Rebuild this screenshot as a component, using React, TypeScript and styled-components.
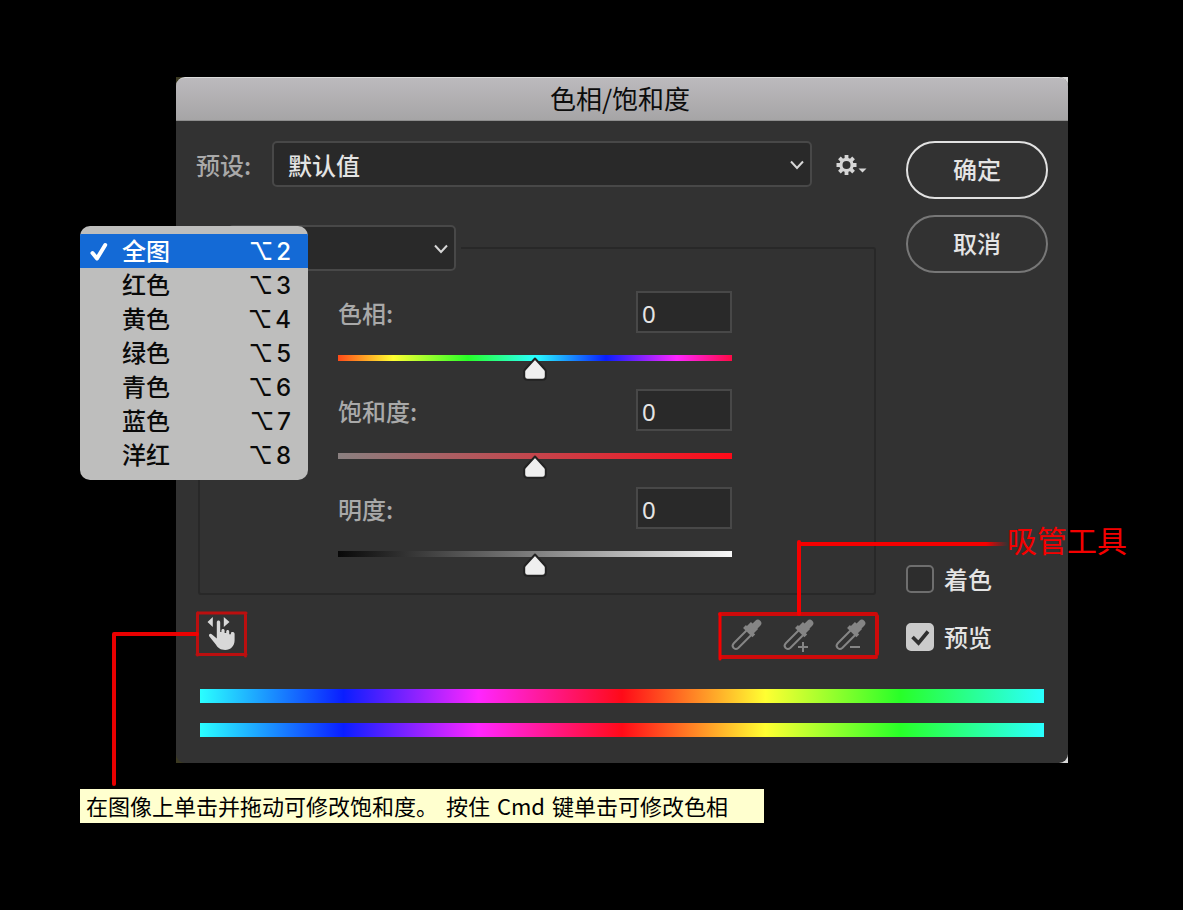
import React, { useState } from 'react';
import styled, { createGlobalStyle } from 'styled-components';

const colors = {
  panel: '#323232',
  field: '#292929',
  fieldBorder: '#484848',
  groove: '#282828',
  label: '#a9a9a9',
  text: '#e4e4e4',
  mark: '#f50000',
  highlight: '#146ad6',
};

const cjk = "'Noto Sans CJK SC', sans-serif";

const GlobalStyle = createGlobalStyle`
  *, *::before, *::after { box-sizing: border-box; }
  body {
    margin: 0;
    background: #000;
    color: ${colors.text};
    font-family: ${cjk};
    font-size: 24px;
    line-height: 34px;
  }
  button, input, select { font: inherit; color: inherit; margin: 0; }
`;

const Page = styled.main`
  padding: 77px 115px 87px 176px;
`;

const Frame = styled.div`
  background: linear-gradient(to right, #3c3a22 50%, #d8d8d8 50%);
`;

const Dialog = styled.section`
  background: ${colors.panel};
  border-radius: 9px;
`;

const TitleBar = styled.header`
  height: 44px;
  padding: 0 4px 2px 0;
  border-radius: 9px 9px 0 0;
  border-top: 1px solid #dcdcdc;
  border-bottom: 1px solid #8e8e8e;
  background: linear-gradient(#bcbabd, #a6a5a6);
  display: flex;
  align-items: center;
  justify-content: center;
`;

const Title = styled.h1`
  margin: 0;
  font-size: 26px;
  font-weight: 400;
  color: #0c0c0c;
`;

const Body = styled.div`
  padding: 20px 20px 26px;
  display: flex;
  flex-direction: column;
  gap: 31px;
`;

const Columns = styled.div`
  display: grid;
  grid-template-columns: 1fr 142px;
  column-gap: 30px;
`;

const MainColumn = styled.div`
  display: flex;
  flex-direction: column;
`;

const SideColumn = styled.div`
  display: flex;
  flex-direction: column;
  justify-content: space-between;
  padding-bottom: 7px;
`;

const Stack = styled.div<{ $gap: number }>`
  display: flex;
  flex-direction: column;
  gap: ${(p) => p.$gap}px;
`;

const PresetRow = styled.div`
  display: flex;
  align-items: center;
  height: 46px;
  margin-bottom: 38px;
`;

const FieldLabel = styled.label`
  padding-top: 2px;
  color: ${colors.label};
  font-weight: 500;
`;

const PresetLabel = styled(FieldLabel)`
  width: 76px;
`;

const SelectBox = styled.span<{ $width?: number }>`
  position: relative;
  display: block;
  height: 46px;
  ${(p) => (p.$width ? `width: ${p.$width}px;` : 'flex: 1;')}

  svg {
    position: absolute;
    right: 7px;
    top: 18px;
    pointer-events: none;
  }
`;

const Select = styled.select`
  appearance: none;
  display: block;
  width: 100%;
  height: 100%;
  padding: 2px 32px 0 14px;
  border: 2px solid ${colors.fieldBorder};
  border-radius: 5px;
  background: ${colors.field};
  color: ${colors.text};
  font-weight: 500;
`;

const IconButton = styled.button`
  display: block;
  padding: 0;
  border: 0;
  background: none;
  line-height: 0;

  svg { display: block; }
`;

const GearButton = styled(IconButton)`
  margin: 2px 8px 0 24px;
`;

const Adjustments = styled.fieldset`
  margin: 0 0 0 2px;
  padding: 20px 142px 16px 28px;
  border: 2px solid ${colors.groove};
  border-radius: 3px;
  min-width: 0;
`;

const ChannelLegend = styled.legend`
  position: relative;
  padding: 0 5px 0 0;
`;

const Menu = styled.ul`
  position: absolute;
  z-index: 2;
  top: 1px;
  right: 153px;
  width: 228px;
  margin: 0;
  padding: 8px 0;
  list-style: none;
  border-radius: 10px;
  background: #bebebd;
  overflow: hidden;
`;

const MenuItem = styled.button<{ $active: boolean }>`
  display: grid;
  grid-template-columns: 33px 1fr auto;
  align-items: center;
  width: 100%;
  height: 34px;
  line-height: 26px;
  padding: 0 17px 3px 9px;
  border: 0;
  text-align: left;
  font-weight: 500;
  background: ${(p) => (p.$active ? colors.highlight : 'transparent')};
  color: ${(p) => (p.$active ? '#fff' : '#0a0a0a')};

  svg { display: block; margin-top: 4px; }
`;

const Shortcut = styled.span`
  display: flex;
  align-items: center;
  gap: 3px;
  padding-top: 5px;
  font-family: Inter, 'DejaVu Sans', sans-serif;
  font-weight: 500;
`;

const Sliders = styled(Stack)`
  padding-left: 110px;
`;

const SliderHead = styled.div`
  display: flex;
  align-items: center;
  justify-content: space-between;
  height: 42px;
  margin-bottom: 22px;
`;

const NumberBox = styled.input`
  width: 96px;
  height: 42px;
  padding: 2px 4px 0;
  border: 2px solid ${colors.fieldBorder};
  border-radius: 0;
  background: ${colors.field};
  font-family: 'Noto Sans', sans-serif;
`;

const thumb =
  "url(\"data:image/svg+xml,%3Csvg xmlns='http://www.w3.org/2000/svg' width='24' height='24'%3E%3Cpath d='M12 1.5 22 12.5Q22.8 13.4 22.8 14.5V19.5Q22.8 22.8 19.5 22.8H4.5Q1.2 22.8 1.2 19.5V14.5Q1.2 13.4 2 12.5Z' fill='%23efefef' stroke='%23222' stroke-width='2' stroke-linejoin='round'/%3E%3C/svg%3E\")";

const Range = styled.input<{ $track: string }>`
  appearance: none;
  display: block;
  width: 100%;
  height: 26px;
  background: linear-gradient(to right, ${(p) => p.$track}) top / 100% 6px no-repeat;

  &::-webkit-slider-runnable-track { height: 26px; padding-top: 2px; }
  &::-webkit-slider-thumb {
    appearance: none;
    width: 24px;
    height: 24px;
    background: ${thumb} center no-repeat;
  }
`;

const ToolRow = styled.div`
  display: flex;
  justify-content: space-between;
  height: 47px;
  margin-top: 16px;
`;

const HandTool = styled.div`
  position: relative;
  padding: 4px 10px;
`;

const Droppers = styled.div`
  position: relative;
  display: flex;
  gap: 16px;
  padding: 6px 7px;
`;

const HandMarks = styled.svg`
  position: absolute;
  left: -86px;
  top: -3px;
  pointer-events: none;
`;

const DropperMarks = styled.svg`
  position: absolute;
  right: -134px;
  top: -73px;
  pointer-events: none;
`;

const MarkText = styled.span`
  position: absolute;
  z-index: 1;
  right: -251px;
  top: -94px;
  font-size: 30px;
  line-height: 44px;
  white-space: nowrap;
  color: ${colors.mark};
`;

const PillButton = styled.button<{ $primary?: boolean }>`
  height: 58px;
  padding: 0 0 2px;
  border: 2px solid ${(p) => (p.$primary ? '#e2e2e2' : '#777')};
  border-radius: 29px;
  background: transparent;
  font-weight: 500;
`;

const CheckLabel = styled.label`
  display: flex;
  align-items: center;
  gap: 10px;
  height: 28px;
  font-weight: 500;
  white-space: nowrap;
`;

const CheckBox = styled.input`
  appearance: none;
  width: 28px;
  height: 28px;
  border: 2px solid #6e6e6e;
  border-radius: 5px;
  background: #2d2d2d;

  &:checked {
    border-color: #cbcbcb;
    background: #cbcbcb
      url("data:image/svg+xml,%3Csvg xmlns='http://www.w3.org/2000/svg' width='24' height='24'%3E%3Cpath d='M4.5 12 10.5 18 20 6.5' fill='none' stroke='%23303030' stroke-width='3.6'/%3E%3C/svg%3E")
      center no-repeat;
  }
`;

const Spectra = styled(Stack)`
  padding: 0 4px;
`;

const Spectrum = styled.div`
  height: 14px;
  background: linear-gradient(
    to right,
    #2affff, #0a1eff 17%, #ff26ff 33%, #ff0a18 50%, #ffff32 67%, #28ff28 83%, #2affff
  );
`;

const Hint = styled.p`
  display: flex;
  gap: 8px;
  width: fit-content;
  margin: 26px 0 0 -96px;
  padding: 0 36px 0 6px;
  height: 34px;
  line-height: 32px;
  font-size: 22px;
  white-space: nowrap;
  background: #ffffcf;
  color: #000;
`;

const Key = styled.kbd`
  margin: 0 2px;
  font-family: inherit;
`;

const Chevron = () => (
  <svg width="16" height="12" viewBox="0 0 16 12" fill="none" stroke="#d6d6d6" strokeWidth="2">
    <path d="M2 2.500 8 9l6-6.500" />
  </svg>
);

const Gear = () => (
  <svg width="32" height="22" viewBox="0 0 32 22">
    <g stroke="#d6d6d6" fill="none">
      <circle cx="10.500" cy="11" r="5.600" strokeWidth="3.200" />
      {[0, 45, 90, 135].map((a) => (
        <path
          key={a}
          d="M10.500 1v3.800M10.500 17.200v3.800"
          strokeWidth="3.800"
          transform={`rotate(${a} 10.500 11)`}
        />
      ))}
    </g>
    <path d="M22.500 14.500h8l-4 4z" fill="#d6d6d6" />
  </svg>
);

const Tick = () => (
  <svg width="20" height="20" viewBox="0 0 20 20" fill="none" stroke="currentColor">
    <path d="M3.500 11 8 16.500 16.200 3" strokeWidth="4" strokeLinecap="round" strokeLinejoin="round" />
  </svg>
);

const Hand = () => (
  <svg width="32" height="38" viewBox="0 0 32 38" fill="#d8d8d8">
    <path d="M6.800 2v10L1.500 7zM17.800 2v10L23.500 7z" />
    <path d="M10.800 7.200c0-2.200 3.400-2.200 3.400 0V17h1.200v-1.600c0-2 3.200-2 3.200 0V18h1.600v-1.400c0-2 3-2 3 0v2.600h1.700v-.9c0-1.900 3.700-1.700 3.700.6v6.400c0 5.700-4 9.700-9.400 9.700-4.700 0-7.200-1.900-9.200-5.200L3.200 21.300c-1-2 1.200-3.300 2.800-1.900l4.800 4.100z" />
  </svg>
);

const Dropper = ({ sign }: { sign?: 'plus' | 'minus' }) => (
  <svg width="36" height="36" viewBox="0 0 36 36" fill="none" stroke="#858585">
    <path d="M28.800 6.200 22 13" strokeWidth="7" strokeLinecap="round" />
    <path d="M19.500 14.500 25.500 8.500" strokeWidth="10" />
    <path d="M15.500 9.500 24.800 18.800" strokeWidth="4" />
    <path d="M17.500 13.500 5 26C1.500 29.500 5.700 34 9.500 30.800L22 18.300" strokeWidth="2" />
    {sign && <path d="M17 30h10" strokeWidth="2" />}
    {sign === 'plus' && <path d="M22 25v10" strokeWidth="2" />}
  </svg>
);

const channels = ['全图', '红色', '黄色', '绿色', '青色', '蓝色', '洋红'];

const adjustments = [
  {
    id: 'hue',
    label: '色相:',
    limit: 180,
    track: '#ff4a18, #ffff32 14%, #28ff28 33%, #2affff 50%, #0a1eff 68%, #ff26ff 86%, #ff0a46',
  },
  { id: 'saturation', label: '饱和度:', limit: 100, track: '#8a8080, #ff0a18' },
  { id: 'lightness', label: '明度:', limit: 100, track: '#080808, #323232 17%, #808080 50%, #f8f8f8' },
];

export default function App() {
  const [channel, setChannel] = useState('全图');
  const [values, setValues] = useState<Record<string, string>>({ hue: '0', saturation: '0', lightness: '0' });

  return (
    <>
      <GlobalStyle />
      <Page>
        <Frame>
          <Dialog aria-labelledby="title">
            <TitleBar>
              <Title id="title">色相/饱和度</Title>
            </TitleBar>
            <Body>
              <Columns>
                <MainColumn>
                  <PresetRow>
                    <PresetLabel htmlFor="preset">预设:</PresetLabel>
                    <SelectBox>
                      <Select id="preset">
                        <option>默认值</option>
                      </Select>
                      <Chevron />
                    </SelectBox>
                    <GearButton aria-label="预设选项">
                      <Gear />
                    </GearButton>
                  </PresetRow>

                  <Adjustments>
                    <ChannelLegend>
                      <SelectBox $width={228}>
                        <Select aria-label="通道" value={channel} onChange={(e) => setChannel(e.target.value)}>
                          {channels.map((c) => (
                            <option key={c}>{c}</option>
                          ))}
                        </Select>
                        <Chevron />
                      </SelectBox>
                      <Menu>
                        {channels.map((c, i) => (
                          <li key={c}>
                            <MenuItem $active={c === channel} onClick={() => setChannel(c)}>
                              <span>{c === channel && <Tick />}</span>
                              <span>{c}</span>
                              <Shortcut>
                                <span>⌥</span>
                                <span>{i + 2}</span>
                              </Shortcut>
                            </MenuItem>
                          </li>
                        ))}
                      </Menu>
                    </ChannelLegend>
                    <Sliders $gap={8}>
                      {adjustments.map((a) => {
                        const update = (e: React.ChangeEvent<HTMLInputElement>) =>
                          setValues({ ...values, [a.id]: e.target.value });
                        return (
                          <div key={a.id}>
                            <SliderHead>
                              <FieldLabel htmlFor={a.id}>{a.label}</FieldLabel>
                              <NumberBox id={a.id} value={values[a.id]} onChange={update} />
                            </SliderHead>
                            <Range
                              type="range"
                              aria-label={a.label}
                              min={-a.limit}
                              max={a.limit}
                              value={values[a.id]}
                              onChange={update}
                              $track={a.track}
                            />
                          </div>
                        );
                      })}
                    </Sliders>
                  </Adjustments>

                  <ToolRow>
                    <HandTool>
                      <IconButton aria-label="目标调整">
                        <Hand />
                      </IconButton>
                      <HandMarks width="140" height="180" fill="none" stroke={colors.mark} strokeLinecap="round">
                        <path d="M88 5h48M87 46.500h49M87.500 5v42M135.500 5v43" strokeWidth="3" strokeOpacity=".7" />
                        <path d="M87 26H4v150" strokeWidth="4" strokeOpacity=".95" strokeLinejoin="round" />
                      </HandMarks>
                    </HandTool>
                    <Droppers>
                      <IconButton aria-label="吸管">
                        <Dropper />
                      </IconButton>
                      <IconButton aria-label="添加到取样">
                        <Dropper sign="plus" />
                      </IconButton>
                      <IconButton aria-label="从取样中减去">
                        <Dropper sign="minus" />
                      </IconButton>
                      <DropperMarks width="294" height="126" fill="none" stroke={colors.mark} strokeLinecap="round">
                        <defs>
                          <linearGradient id="fade" gradientUnits="userSpaceOnUse" x1="270" y1="0" x2="292" y2="0">
                            <stop offset="0" stopColor={colors.mark} />
                            <stop offset="1" stopColor={colors.mark} stopOpacity="0" />
                          </linearGradient>
                        </defs>
                        <path d="M4 76h156M5 119h155M161 78v38" strokeWidth="4" strokeOpacity=".8" />
                        <path d="M4 76v45" strokeWidth="3" />
                        <path d="M83 4v72" strokeWidth="4" />
                        <path d="M83 6h208" strokeWidth="4" stroke="url(#fade)" />
                      </DropperMarks>
                      <MarkText>吸管工具</MarkText>
                    </Droppers>
                  </ToolRow>
                </MainColumn>

                <SideColumn>
                  <Stack $gap={16}>
                    <PillButton $primary>确定</PillButton>
                    <PillButton>取消</PillButton>
                  </Stack>
                  <Stack $gap={30}>
                    <CheckLabel>
                      <CheckBox type="checkbox" />
                      <span>着色</span>
                    </CheckLabel>
                    <CheckLabel>
                      <CheckBox type="checkbox" defaultChecked />
                      <span>预览</span>
                    </CheckLabel>
                  </Stack>
                </SideColumn>
              </Columns>

              <Spectra $gap={20}>
                <Spectrum />
                <Spectrum />
              </Spectra>
            </Body>
          </Dialog>
        </Frame>
        <Hint>
          <span>在图像上单击并拖动可修改饱和度。</span>
          <span>
            按住 <Key>Cmd</Key> 键单击可修改色相
          </span>
        </Hint>
      </Page>
    </>
  );
}
